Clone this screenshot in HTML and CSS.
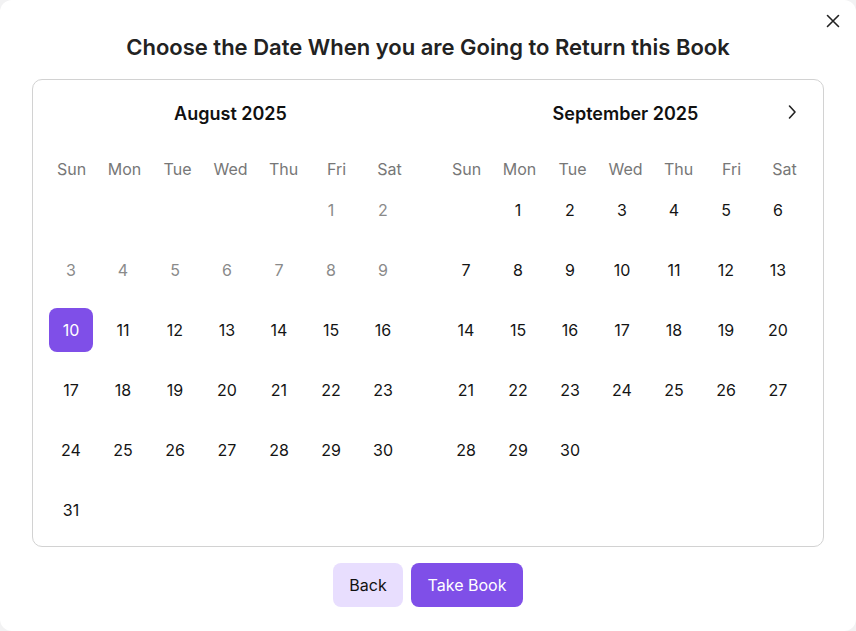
FILE: index.html
```html
<!DOCTYPE html>
<html>
<head>
<meta charset="utf-8">
<link rel="stylesheet" href="styles.css">
</head>
<body>
<div class="modal">
  <button class="close" aria-label="Close">
    <svg width="14" height="14" viewBox="0 0 14 14"><path d="M1.5 1.5 L12.5 12.5 M12.5 1.5 L1.5 12.5" stroke="#222" stroke-width="1.6" fill="none" stroke-linecap="round"/></svg>
  </button>
  <h1 class="title">Choose the Date When you are Going to Return this Book</h1>
  <div class="calendar">
    <button class="next" aria-label="Next month">
      <svg width="16" height="16" viewBox="0 0 16 16"><path d="M5.5 2 L11 8 L5.5 14" stroke="#222" stroke-width="1.6" fill="none" stroke-linecap="round" stroke-linejoin="round"/></svg>
    </button>
    <div class="month">
      <div class="caption">August 2025</div>
      <div class="weekdays"><span>Sun</span><span>Mon</span><span>Tue</span><span>Wed</span><span>Thu</span><span>Fri</span><span>Sat</span></div>
      <div class="days">
        <span></span><span></span><span></span><span></span><span></span>
        <span class="day off">1</span><span class="day off">2</span>
        <span class="day off">3</span><span class="day off">4</span><span class="day off">5</span><span class="day off">6</span><span class="day off">7</span><span class="day off">8</span><span class="day off">9</span>
        <span class="day sel">10</span><span class="day">11</span><span class="day">12</span><span class="day">13</span><span class="day">14</span><span class="day">15</span><span class="day">16</span>
        <span class="day">17</span><span class="day">18</span><span class="day">19</span><span class="day">20</span><span class="day">21</span><span class="day">22</span><span class="day">23</span>
        <span class="day">24</span><span class="day">25</span><span class="day">26</span><span class="day">27</span><span class="day">28</span><span class="day">29</span><span class="day">30</span>
        <span class="day">31</span>
      </div>
    </div>
    <div class="month">
      <div class="caption">September 2025</div>
      <div class="weekdays"><span>Sun</span><span>Mon</span><span>Tue</span><span>Wed</span><span>Thu</span><span>Fri</span><span>Sat</span></div>
      <div class="days">
        <span></span>
        <span class="day">1</span><span class="day">2</span><span class="day">3</span><span class="day">4</span><span class="day">5</span><span class="day">6</span>
        <span class="day">7</span><span class="day">8</span><span class="day">9</span><span class="day">10</span><span class="day">11</span><span class="day">12</span><span class="day">13</span>
        <span class="day">14</span><span class="day">15</span><span class="day">16</span><span class="day">17</span><span class="day">18</span><span class="day">19</span><span class="day">20</span>
        <span class="day">21</span><span class="day">22</span><span class="day">23</span><span class="day">24</span><span class="day">25</span><span class="day">26</span><span class="day">27</span>
        <span class="day">28</span><span class="day">29</span><span class="day">30</span>
      </div>
    </div>
  </div>
  <div class="actions">
    <button class="btn back">Back</button>
    <button class="btn primary">Take Book</button>
  </div>
</div>
</body>
</html>
```

FILE: styles.css
```css
* { box-sizing: border-box; }
html, body { margin: 0; padding: 0; }
body {
  background: #f2f2f3;
  font-family: Inter, "Noto Sans", sans-serif;
  color: #111;
}
.modal {
  position: relative;
  width: 856px;
  height: 631px;
  background: #fff;
  border-radius: 12px;
  padding-top: 33px;
  display: flex;
  flex-direction: column;
  align-items: center;
}
.close {
  position: absolute;
  top: 14px;
  right: 16px;
  width: 14px;
  height: 14px;
  padding: 0;
  border: 0;
  background: none;
  display: flex;
}
.title {
  margin: 0;
  font-size: 22px;
  line-height: 28px;
  font-weight: 600;
  color: #222;
  letter-spacing: 0;
}
.calendar {
  position: relative;
  margin-top: 18px;
  width: 792px;
  height: 468px;
  border: 1px solid #d2d2d2;
  border-radius: 10px;
  padding: 21px 12px 0 12px;
  display: flex;
  gap: 24px;
}
.next {
  position: absolute;
  top: 24px;
  right: 23px;
  width: 16px;
  height: 16px;
  padding: 0;
  border: 0;
  background: none;
  display: flex;
}
.month { width: 371px; }
.caption {
  text-align: center;
  font-size: 18px;
  line-height: 26px;
  font-weight: 600;
  color: #111;
}
.weekdays {
  margin-top: 31px;
  display: grid;
  grid-template-columns: repeat(7, 53px);
  height: 22px;
}
.weekdays span {
  text-align: center;
  font-size: 16px;
  line-height: 22px;
  color: #777;
}
.days {
  display: grid;
  grid-template-columns: repeat(7, 52px);
  grid-auto-rows: 60px;
}
.day {
  width: 44px;
  height: 44px;
  margin: 8px 4px;
  border-radius: 8px;
  display: flex;
  align-items: center;
  justify-content: center;
  font-size: 16px;
  color: #141414;
}
.day.off { color: #8a8a8a; }
.day.sel { background: #7f4fe8; color: #fff; }
.actions {
  margin-top: 16px;
  display: flex;
  gap: 8px;
}
.btn {
  height: 44px;
  border: 0;
  border-radius: 8px;
  font-family: Inter, "Noto Sans", sans-serif;
  font-size: 16px;
  padding: 0;
  white-space: nowrap;
}
.back { background: #e8defe; color: #111; width: 70px; }
.primary { background: #7f4fe8; color: #fff; width: 112px; }
```
